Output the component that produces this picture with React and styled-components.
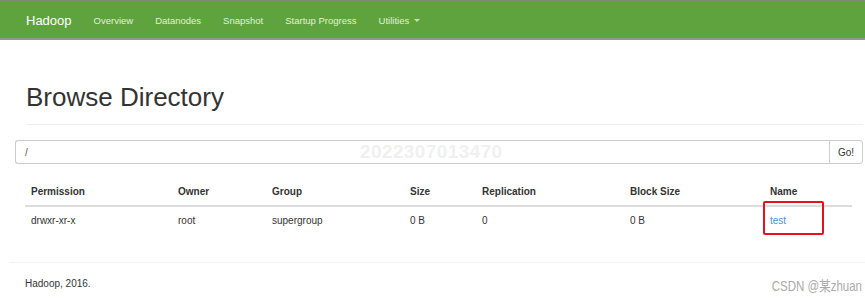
import React from "react"
import styled, { createGlobalStyle } from "styled-components"

const GlobalStyle = createGlobalStyle`
  body {
    margin: 0;
    background: #fff;
    font-family: "Liberation Sans", Arial, sans-serif;
    color: #333;
  }
`

const Page = styled.div`
  position: relative;
  width: 865px;
  height: 302px;
  overflow: hidden;
`

const Navbar = styled.nav`
  height: 36px;
  background: #5fa33e;
  border-top: 2px solid #7d8b76;
  border-bottom: 2px solid #8c9a86;
  display: flex;
  align-items: center;
  padding-left: 26px;
`

const Brand = styled.span`
  color: #fff;
  font-size: 13px;
  margin-right: 22px;
`

const NavLink = styled.span`
  color: #e3efdc;
  font-size: 9.5px;
  margin-right: ${props => props.gap}px;
  display: flex;
  align-items: center;
`

const Caret = styled.span`
  display: inline-block;
  margin-left: 5px;
  border-top: 3px solid #c8dfbc;
  border-left: 3px solid transparent;
  border-right: 3px solid transparent;
`

const Header = styled.div`
  margin: 0 2px 0 26px;
  padding-top: 43px;
  padding-bottom: 12px;
  border-bottom: 1px solid #eee;
`

const Title = styled.h1`
  margin: 0;
  font-size: 26px;
  font-weight: 400;
  line-height: 29px;
  color: #333;
`

const InputGroup = styled.div`
  position: relative;
  display: flex;
  margin: 15px 2px 0 15px;
  height: 24px;
`

const PathInput = styled.div`
  flex: 1;
  border: 1px solid #ccc;
  border-right: none;
  border-radius: 3px 0 0 3px;
  font-size: 10px;
  color: #555;
  display: flex;
  align-items: center;
  padding-left: 9px;
`

const GoButton = styled.div`
  width: 32px;
  border: 1px solid #ccc;
  border-radius: 0 3px 3px 0;
  background: #fff;
  font-size: 10px;
  color: #333;
  display: flex;
  align-items: center;
  justify-content: center;
`

const Watermark = styled.span`
  position: absolute;
  left: 345px;
  top: 1px;
  font-size: 19px;
  font-weight: 700;
  color: #f0f0f0;
  letter-spacing: 0.4px;
`

const Table = styled.div`
  margin: 13px 13px 0 25px;
`

const Row = styled.div`
  display: grid;
  grid-template-columns: 147px 94px 138px 72px 148px 140px 1fr;
  height: ${props => (props.head ? 28 : 26)}px;
  align-items: center;
  border-bottom: ${props => (props.head ? "2px solid #ddd" : "none")};
  font-size: 10px;
`

const Cell = styled.span`
  padding-left: 6px;
  font-weight: ${props => (props.head ? 700 : 400)};
  color: ${props => (props.link ? "#4a90d9" : "#333")};
  position: relative;
`

const Highlight = styled.span`
  position: absolute;
  left: -1px;
  top: -14px;
  width: 57px;
  height: 30px;
  border: 2px solid #e8111b;
  border-radius: 2px;
`

const Footer = styled.footer`
  margin: 29px 0 0 9px;
  border-top: 1px solid #f2f2f2;
  padding: 15px 0 0 16px;
  font-size: 10px;
  color: #333;
`

const Csdn = styled.span`
  position: absolute;
  right: 3px;
  bottom: 7px;
  font-size: 14px;
  color: #aaa;
  font-family: "Liberation Sans", "Noto Sans CJK SC", sans-serif;
  transform: scaleX(0.82);
  transform-origin: right center;
`

const headers = ["Permission", "Owner", "Group", "Size", "Replication", "Block Size", "Name"]
const values = ["drwxr-xr-x", "root", "supergroup", "0 B", "0", "0 B"]

const App = () => (
  <Page>
    <GlobalStyle />
    <Navbar>
      <Brand>Hadoop</Brand>
      <NavLink gap={22}>Overview</NavLink>
      <NavLink gap={22}>Datanodes</NavLink>
      <NavLink gap={22}>Snapshot</NavLink>
      <NavLink gap={22}>Startup Progress</NavLink>
      <NavLink gap={0}>
        Utilities
        <Caret />
      </NavLink>
    </Navbar>
    <Header>
      <Title>Browse Directory</Title>
    </Header>
    <InputGroup>
      <PathInput>/</PathInput>
      <GoButton>Go!</GoButton>
      <Watermark>2022307013470</Watermark>
    </InputGroup>
    <Table>
      <Row head>
        {headers.map(h => (
          <Cell head key={h}>{h}</Cell>
        ))}
      </Row>
      <Row>
        {values.map((v, i) => (
          <Cell key={i}>{v}</Cell>
        ))}
        <Cell link>
          test
          <Highlight />
        </Cell>
      </Row>
    </Table>
    <Footer>Hadoop, 2016.</Footer>
    <Csdn>CSDN @某zhuan</Csdn>
  </Page>
)

export default App
